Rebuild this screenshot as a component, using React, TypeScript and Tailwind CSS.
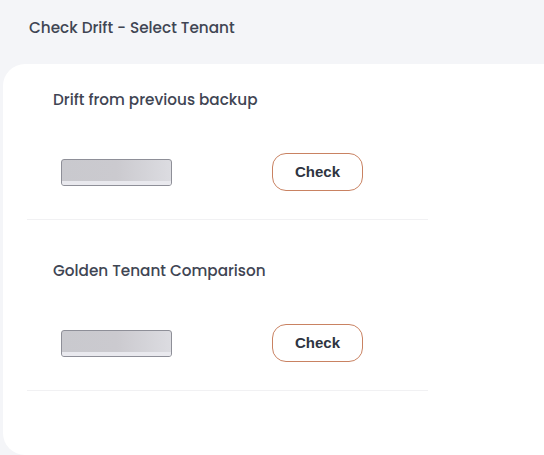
import React from 'react';

const font = { fontFamily: 'Poppins, Inter, "Noto Sans", sans-serif' };

const Skeleton = () => (
    <div className="relative h-[27px] w-[111px] overflow-hidden rounded-[3px] border border-[#8e8f98] bg-gradient-to-r from-[#c9c9ce] via-[#cbcacf] to-[#dcdce1]">
        <div className="absolute bottom-0 left-0 right-0 h-[4px] bg-[#e9e9ee]" />
    </div>
);

const DriftSection = ({ title, first }: { title: string; first?: boolean }) => (
    <div className={`w-[401px] border-b border-[#f1f1f3] ${first ? 'pt-[25px]' : 'pt-[40px]'}`}>
        <div className="pl-[26px] text-[15.25px] font-medium leading-[22px] text-[#3f4553]" style={font}>
            {title}
        </div>
        <div className="flex items-center pb-[28px] pl-[34px] pt-[42px]">
            <Skeleton />
            <button
                className="ml-[100px] h-[38px] w-[91px] rounded-[14px] border border-[#c98262] bg-white text-[15px] font-bold text-[#2e3441]"
                style={{ fontFamily: '"Liberation Sans", Arial, sans-serif' }}
            >
                Check
            </button>
        </div>
    </div>
);

export default function App() {
    return (
        <div className="flex h-[455px] w-[544px] flex-col overflow-hidden bg-[#f4f5f8]">
            <div className="h-[64px] pl-[29px] pt-[17px] text-[15.25px] font-medium leading-[22px] text-[#3f4553]" style={font}>
                Check Drift - Select Tenant
            </div>
            <div className="ml-[3px] flex-1 rounded-l-[22px] bg-white pl-[24px]">
                <DriftSection title="Drift from previous backup" first />
                <DriftSection title="Golden Tenant Comparison" />
            </div>
        </div>
    );
}
